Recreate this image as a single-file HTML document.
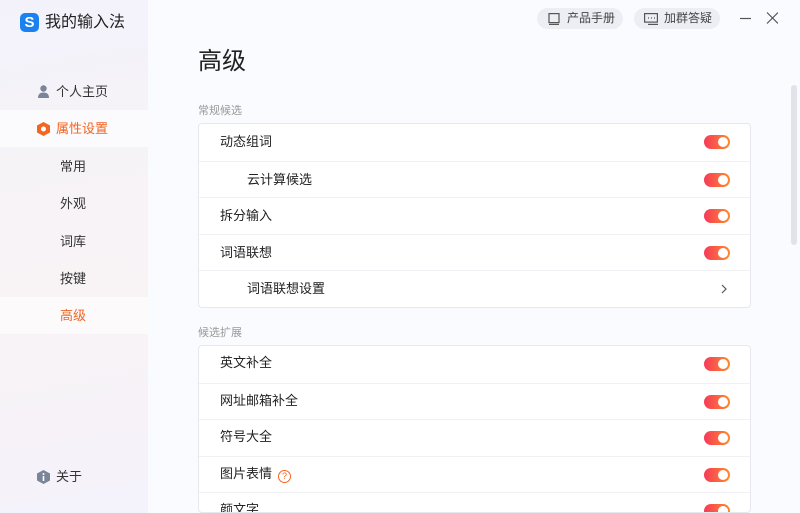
<!DOCTYPE html><html><head><meta charset="utf-8"><style>
*{margin:0;padding:0;box-sizing:border-box}
html{width:800px;height:513px;overflow:hidden}
body{width:800px;height:513px;overflow:hidden;background:#fafbfe;font-family:"Liberation Sans","Noto Sans CJK SC",sans-serif;position:relative;color:#222}
.side{position:absolute;left:0;top:0;width:148px;height:513px;background:linear-gradient(170deg,#f3f2fb 0%,#f7f3f6 40%,#f8f3f5 60%,#f4f2fb 100%)}
.logo{position:absolute;left:20px;top:13px;width:19px;height:19px;border-radius:5px;background:#1a82f0;color:#fff;font-weight:bold;font-size:15px;text-align:center;line-height:19px}
.title{position:absolute;left:45px;top:12px;font-size:16px;line-height:22px;color:#222}
.nav{position:absolute;left:0;width:148px;height:37px;line-height:37px;font-size:13px;color:#333}
.act{background:rgba(255,255,255,.6)}
.or{color:#f26522}
.main{position:absolute;left:148px;top:0;width:652px;height:513px;overflow:hidden}
h1{position:absolute;left:50px;top:41px;font-size:24px;font-weight:normal;color:#222}
.sec{position:absolute;left:50px;font-size:11px;color:#999}
.card{position:absolute;left:50px;width:553px;background:#fff;border:1px solid #e6e8ee;border-radius:4px;overflow:hidden}
.row{height:36.6px;line-height:35px;font-size:13px;color:#222;padding-left:21px;border-top:1px solid #f0f1f4;position:relative}
.row:first-child{border-top:none}
.c2 .row{height:36.5px;line-height:34px}
.sub{padding-left:48px}
.sw{position:absolute;left:505px;top:11px;width:26px;height:14px;border-radius:7px;background:linear-gradient(90deg,#f63a5a,#ff8a2a)}
.sw:after{content:"";position:absolute;right:2px;top:2px;width:10px;height:10px;border-radius:50%;background:#fff}
.btn{position:absolute;top:8px;height:21px;border-radius:11px;background:#eceef4;font-size:12px;color:#444;line-height:21px;padding-left:30px}
</style></head><body>
<div class="side">
<div class="logo">S</div><div class="title">我的输入法</div>
<div class="nav" style="top:73px"><svg style="position:absolute;left:38px;top:12px" width="11" height="13" viewBox="0 0 11 13"><circle cx="5.5" cy="3.5" r="3.2" fill="#7a8599"/><path d="M0 13 Q0 7.5 5.5 7.5 Q11 7.5 11 13Z" fill="#7a8599"/></svg><span style="position:absolute;left:56px">个人主页</span></div>
<div class="nav act" style="top:110px"><svg style="position:absolute;left:37px;top:12px" width="13" height="14" viewBox="0 0 13 14"><path d="M6.5 0L13 3.5V10.5L6.5 14L0 10.5V3.5Z" fill="#f26522"/><circle cx="6.5" cy="7" r="2.5" fill="#fff"/></svg><span class="or" style="position:absolute;left:56px">属性设置</span></div>
<div class="nav" style="top:148px"><span style="position:absolute;left:60px">常用</span></div>
<div class="nav" style="top:185px"><span style="position:absolute;left:60px">外观</span></div>
<div class="nav" style="top:223px"><span style="position:absolute;left:60px">词库</span></div>
<div class="nav" style="top:260px"><span style="position:absolute;left:60px">按键</span></div>
<div class="nav act" style="top:297px"><span class="or" style="position:absolute;left:60px">高级</span></div>
<div class="nav" style="top:458px"><svg style="position:absolute;left:37px;top:12px" width="13" height="14" viewBox="0 0 13 14"><path d="M6.5 0L13 3.5V10.5L6.5 14L0 10.5V3.5Z" fill="#7a8599"/><rect x="5.7" y="6" width="1.6" height="5" fill="#fff"/><circle cx="6.5" cy="4" r="1" fill="#fff"/></svg><span style="position:absolute;left:56px">关于</span></div>
</div>
<div class="main">
<div class="btn" style="left:389px;width:86px"><svg style="position:absolute;left:11px;top:5px" width="12" height="12" viewBox="0 0 12 12" fill="none" stroke="#555" stroke-width="1.2"><rect x="1" y="0.6" width="10" height="9"/><path d="M1 11.4H11"/></svg>产品手册</div>
<div class="btn" style="left:486px;width:86px"><svg style="position:absolute;left:10px;top:5px" width="14" height="12" viewBox="0 0 14 12" fill="none" stroke="#555" stroke-width="1.2"><rect x="0.6" y="0.6" width="12.8" height="8.5"/><path d="M4 11.4H14"/><path d="M4 5h1M7 5h1M10 5h1"/></svg>加群答疑</div>
<svg style="position:absolute;left:590px;top:12px" width="40" height="12" viewBox="0 0 40 12" stroke="#555" stroke-width="1.2"><path d="M2 6.5H13"/><path d="M31 0.5L42 11.5M42 0.5L31 11.5" transform="translate(-2 0)"/></svg>
<h1>高级</h1>
<div class="sec" style="top:102px">常规候选</div>
<div class="card" style="top:123px">
<div class="row">动态组词<div class="sw"></div></div>
<div class="row sub">云计算候选<div class="sw"></div></div>
<div class="row">拆分输入<div class="sw"></div></div>
<div class="row">词语联想<div class="sw"></div></div>
<div class="row sub">词语联想设置<svg style="position:absolute;left:522px;top:13px" width="6" height="10" viewBox="0 0 6 10" fill="none" stroke="#555" stroke-width="1.2"><path d="M1 1L5 5L1 9"/></svg></div>
</div>
<div class="sec" style="top:324px">候选扩展</div>
<div class="card c2" style="top:345px;height:168px">
<div class="row">英文补全<div class="sw"></div></div>
<div class="row">网址邮箱补全<div class="sw"></div></div>
<div class="row">符号大全<div class="sw"></div></div>
<div class="row">图片表情<span style="display:inline-block;width:13px;height:13px;border:1.3px solid #f26522;border-radius:50%;color:#f26522;font-size:9px;line-height:11px;text-align:center;margin-left:6px;vertical-align:-1px">?</span><div class="sw"></div></div>
<div class="row">颜文字<div class="sw"></div></div>
</div>
<div style="position:absolute;left:643px;top:85px;width:6px;height:160px;border-radius:3px;background:#e1e3ea"></div>
</div>
</body></html>
